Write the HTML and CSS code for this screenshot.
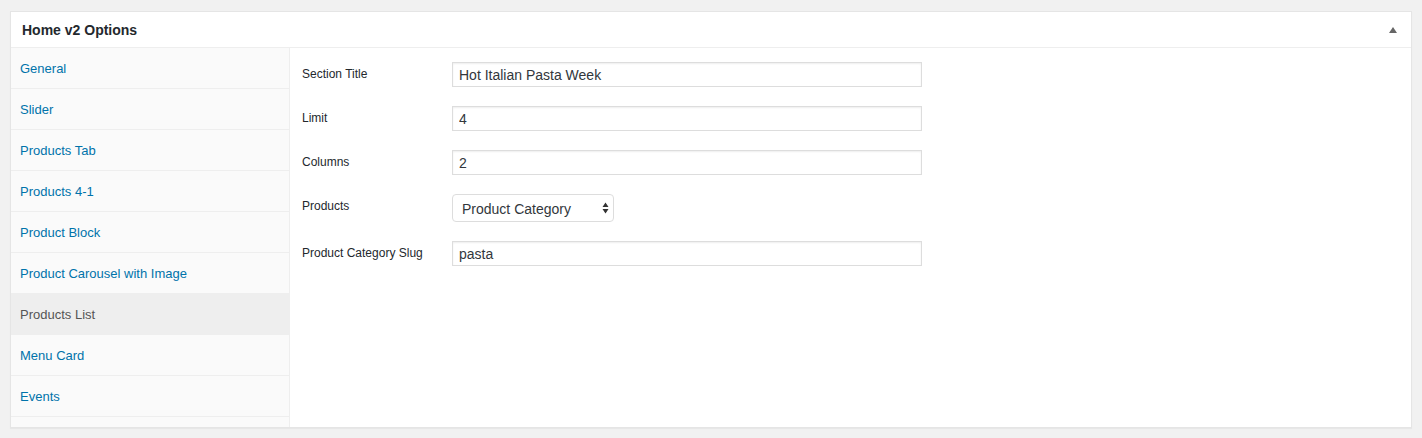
FILE: index.html
```html
<!DOCTYPE html>
<html>
<head>
<meta charset="utf-8">
<link rel="stylesheet" href="styles.css">
</head>
<body>
<div class="postbox">
  <div class="postbox-header">
    <h2 class="postbox-title">Home v2 Options</h2>
    <span class="toggle-arrow"></span>
  </div>
  <div class="postbox-body">
    <ul class="tabs">
      <li class="tab"><a href="#">General</a></li>
      <li class="tab"><a href="#">Slider</a></li>
      <li class="tab"><a href="#">Products Tab</a></li>
      <li class="tab"><a href="#">Products 4-1</a></li>
      <li class="tab"><a href="#">Product Block</a></li>
      <li class="tab"><a href="#">Product Carousel with Image</a></li>
      <li class="tab active"><a href="#">Products List</a></li>
      <li class="tab"><a href="#">Menu Card</a></li>
      <li class="tab"><a href="#">Events</a></li>
    </ul>
    <div class="panel">
      <div class="field">
        <label class="field-label">Section Title</label>
        <input class="text-input" type="text" value="Hot Italian Pasta Week">
      </div>
      <div class="field">
        <label class="field-label">Limit</label>
        <input class="text-input" type="text" value="4">
      </div>
      <div class="field">
        <label class="field-label">Columns</label>
        <input class="text-input" type="text" value="2">
      </div>
      <div class="field">
        <label class="field-label">Products</label>
        <div class="select">
          <span class="select-value">Product Category</span>
          <svg class="select-arrows" width="7" height="12" viewBox="0 0 7 12"><path d="M3.5 0.5 L6.5 5 L0.5 5 Z M0.5 7 L6.5 7 L3.5 11.5 Z" fill="#333"/></svg>
        </div>
      </div>
      <div class="field">
        <label class="field-label">Product Category Slug</label>
        <input class="text-input" type="text" value="pasta">
      </div>
    </div>
  </div>
</div>
</body>
</html>
```

FILE: styles.css
```css
html, body {
  margin: 0;
  padding: 0;
  background: #f1f1f1;
}
body {
  padding: 11px 10px 10px 10px;
  font-family: "Liberation Sans", Arial, sans-serif;
  color: #444;
}
.postbox {
  background: #fff;
  border: 1px solid #e5e5e5;
  box-shadow: 0 1px 1px rgba(0,0,0,0.04);
}
.postbox-header {
  height: 35px;
  border-bottom: 1px solid #eee;
  display: flex;
  align-items: center;
  justify-content: space-between;
  padding: 0 14px 0 11px;
}
.postbox-title {
  margin: 0;
  font-size: 14px;
  font-weight: bold;
  color: #23282d;
  line-height: 1;
  padding-top: 1px;
}
.toggle-arrow {
  width: 0;
  height: 0;
  border-left: 4px solid transparent;
  border-right: 4px solid transparent;
  border-bottom: 6px solid #666;
  margin-top: 1px;
}
.postbox-body {
  display: flex;
}
.tabs {
  list-style: none;
  margin: 0;
  padding: 0 0 10px 0;
  width: 278px;
  background: #fafafa;
  border-right: 1px solid #eee;
}
.tab {
  height: 40px;
  border-bottom: 1px solid #eee;
  display: flex;
  align-items: center;
  padding: 0 9px;
  font-size: 13px;
}
.tab a {
  color: #0073aa;
  text-decoration: none;
}
.tab.active {
  background: #eee;
}
.tab.active a {
  color: #555;
}
.panel {
  flex: 1;
  padding: 14px 12px;
  display: flex;
  flex-direction: column;
  gap: 19px;
}
.field {
  display: flex;
  align-items: flex-start;
}
.field-label {
  width: 150px;
  font-size: 12px;
  line-height: 18px;
  padding-top: 3px;
  color: #23282d;
}
.text-input {
  box-sizing: border-box;
  width: 470px;
  height: 25px;
  margin: 0;
  border: 1px solid #ddd;
  box-shadow: inset 0 1px 2px rgba(0,0,0,0.07);
  padding: 0 6px;
  font-family: "Liberation Sans", Arial, sans-serif;
  font-size: 14px;
  color: #32373c;
  background: #fff;
  outline: none;
  border-radius: 0;
}
.select {
  box-sizing: border-box;
  width: 162px;
  height: 28px;
  border: 1px solid #ddd;
  border-radius: 4px;
  background: #fff;
  display: flex;
  align-items: center;
  justify-content: space-between;
  padding: 0 4px 0 9px;
  font-size: 14px;
  color: #32373c;
}
.select-value {
  padding-top: 1px;
}
.select-arrows {
  display: block;
}
```
